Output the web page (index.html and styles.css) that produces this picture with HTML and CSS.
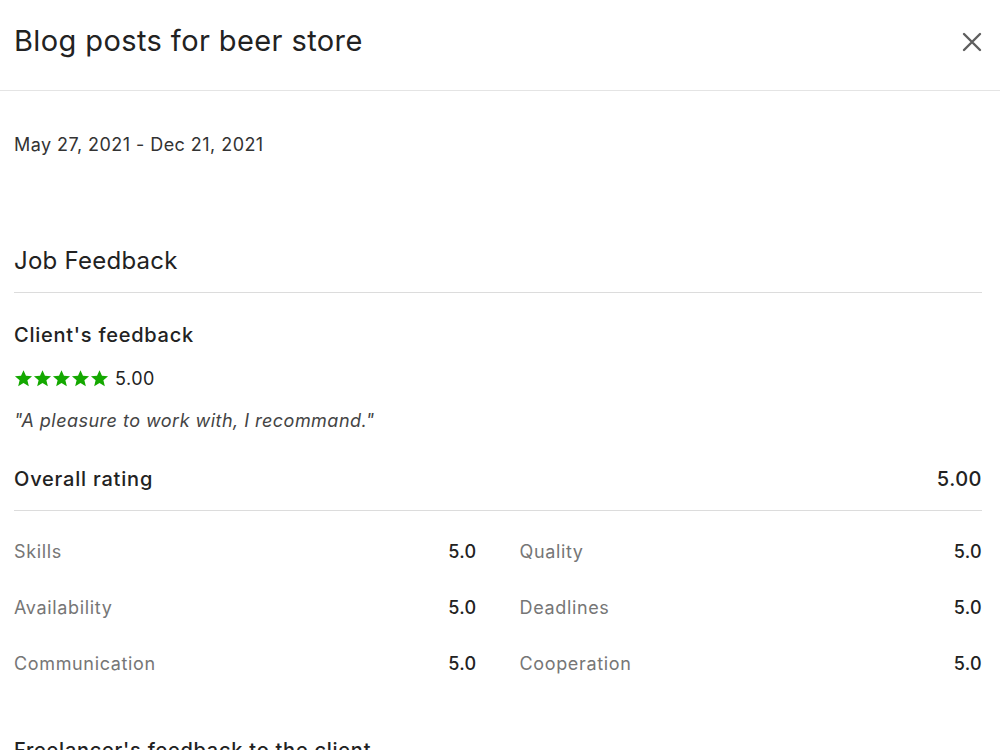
FILE: index.html
```html
<!DOCTYPE html>
<html>
<head>
<meta charset="utf-8">
<link rel="stylesheet" href="styles.css">
</head>
<body>
<div class="modal">
  <header class="modal-header">
    <h1 class="title">Blog posts for beer store</h1>
    <button class="close" aria-label="Close">
      <svg width="20" height="20" viewBox="0 0 20 20"><path d="M2 2 L18 18 M18 2 L2 18" stroke="#5e5e5e" stroke-width="2.4" stroke-linecap="round"/></svg>
    </button>
  </header>
  <div class="modal-body">
    <p class="dates">May 27, 2021 - Dec 21, 2021</p>
    <h2 class="section-title">Job Feedback</h2>
    <h3 class="sub-title">Client's feedback</h3>
    <div class="stars-row">
      <span class="stars">
        <svg viewBox="0 0 20 20"><path d="M10 1.2 L12.6 7.2 L19 7.6 L14.1 11.8 L15.6 18.2 L10 14.8 L4.4 18.2 L5.9 11.8 L1 7.6 L7.4 7.2 Z"/></svg>
        <svg viewBox="0 0 20 20"><path d="M10 1.2 L12.6 7.2 L19 7.6 L14.1 11.8 L15.6 18.2 L10 14.8 L4.4 18.2 L5.9 11.8 L1 7.6 L7.4 7.2 Z"/></svg>
        <svg viewBox="0 0 20 20"><path d="M10 1.2 L12.6 7.2 L19 7.6 L14.1 11.8 L15.6 18.2 L10 14.8 L4.4 18.2 L5.9 11.8 L1 7.6 L7.4 7.2 Z"/></svg>
        <svg viewBox="0 0 20 20"><path d="M10 1.2 L12.6 7.2 L19 7.6 L14.1 11.8 L15.6 18.2 L10 14.8 L4.4 18.2 L5.9 11.8 L1 7.6 L7.4 7.2 Z"/></svg>
        <svg viewBox="0 0 20 20"><path d="M10 1.2 L12.6 7.2 L19 7.6 L14.1 11.8 L15.6 18.2 L10 14.8 L4.4 18.2 L5.9 11.8 L1 7.6 L7.4 7.2 Z"/></svg>
      </span>
      <span class="score">5.00</span>
    </div>
    <p class="quote">"A pleasure to work with, I recommand."</p>
    <div class="overall">
      <span class="overall-label">Overall rating</span>
      <span class="overall-value">5.00</span>
    </div>
    <div class="grid">
      <div class="item"><span class="label">Skills</span><span class="value">5.0</span></div>
      <div class="item"><span class="label">Quality</span><span class="value">5.0</span></div>
      <div class="item"><span class="label">Availability</span><span class="value">5.0</span></div>
      <div class="item"><span class="label">Deadlines</span><span class="value">5.0</span></div>
      <div class="item"><span class="label">Communication</span><span class="value">5.0</span></div>
      <div class="item"><span class="label">Cooperation</span><span class="value">5.0</span></div>
    </div>
    <h3 class="sub-title freelancer">Freelancer's feedback to the client</h3>
  </div>
</div>
</body>
</html>
```
FILE: styles.css
```css
* { box-sizing: border-box; }
html, body { margin: 0; padding: 0; background: #fff; }
body {
  font-family: Inter, "Liberation Sans", Arial, sans-serif;
  color: #222;
  overflow: hidden;
  height: 750px;
}
.modal { width: 1000px; }
.modal-header {
  display: flex;
  align-items: center;
  justify-content: space-between;
  height: 91px;
  padding: 0 18px 0 14px;
  border-bottom: 1px solid #e4e4e4;
}
.title {
  margin: 0;
  font-size: 29px;
  font-weight: 400;
  letter-spacing: 0.4px;
  color: #222;
  padding-bottom: 10px;
}
.close {
  border: 0;
  background: none;
  padding: 0;
  width: 20px;
  height: 20px;
  margin-bottom: 6px;
  display: flex;
}
.modal-body { padding: 0 18px 0 14px; }
.dates {
  margin: 0;
  padding-top: 43px;
  font-size: 18px;
  letter-spacing: 0.45px;
  color: #333;
  line-height: 22px;
}
.section-title {
  margin: 0;
  margin-top: 90px;
  font-size: 24px;
  font-weight: 400;
  letter-spacing: 0.25px;
  line-height: 30px;
  padding-bottom: 16px;
  border-bottom: 1px solid #dcdcdc;
}
.sub-title {
  margin: 0;
  margin-top: 29px;
  font-size: 20px;
  font-weight: 500;
  letter-spacing: 0.75px;
  line-height: 26px;
  color: #222;
}
.stars-row {
  display: flex;
  align-items: center;
  margin-top: 20px;
  height: 20px;
}
.stars { display: flex; gap: 0; }
.stars svg { width: 19px; height: 19px; fill: #14a800; }
.score { margin-left: 6px; font-size: 18px; letter-spacing: 0.5px; color: #222; }
.quote {
  margin: 0;
  margin-top: 21px;
  font-size: 18px;
  font-style: italic;
  letter-spacing: 0.47px;
  color: #444;
  line-height: 24px;
}
.overall {
  display: flex;
  justify-content: space-between;
  align-items: center;
  margin-top: 34px;
  padding-bottom: 19px;
  border-bottom: 1px solid #dcdcdc;
  line-height: 24px;
}
.overall-label { font-size: 20px; font-weight: 500; letter-spacing: 0.8px; }
.overall-value { font-size: 20px; font-weight: 500; letter-spacing: 0.5px; }
.grid {
  display: grid;
  grid-template-columns: 1fr 1fr;
  column-gap: 43px;
  row-gap: 32px;
  margin-top: 29px;
}
.item {
  display: flex;
  justify-content: space-between;
  line-height: 24px;
  font-size: 18px;
  letter-spacing: 0.65px;
}
.label { color: #767676; }
.value { color: #222; font-weight: 500; letter-spacing: 0.3px; }
.freelancer { margin-top: 61px; }
```
